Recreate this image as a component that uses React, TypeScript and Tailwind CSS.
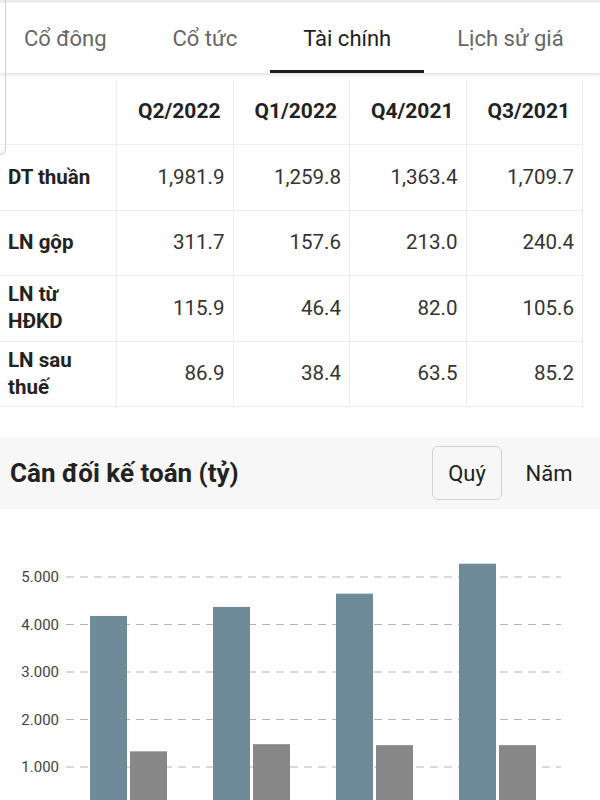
const tabs = ["Cổ đông", "Cổ tức", "Tài chính", "Lịch sử giá"];
const quarters = ["Q2/2022", "Q1/2022", "Q4/2021", "Q3/2021"];

const rows: { label: string; values: string[] }[] = [
  { label: "DT thuần", values: ["1,981.9", "1,259.8", "1,363.4", "1,709.7"] },
  { label: "LN gộp", values: ["311.7", "157.6", "213.0", "240.4"] },
  { label: "LN từ HĐKD", values: ["115.9", "46.4", "82.0", "105.6"] },
  { label: "LN sau thuế", values: ["86.9", "38.4", "63.5", "85.2"] },
];

const assets = [4180, 4370, 4650, 5280];
const equity = [1330, 1480, 1460, 1460];
const ticks = [5000, 4000, 3000, 2000, 1000];

const BASE = 305.5;
const SCALE = 0.0475;

function BalanceChart() {
  return (
    <svg width="600" height="300" viewBox="0 0 600 300" className="block">
      {ticks.map((t) => {
        const y = BASE - t * SCALE;
        return (
          <g key={t}>
            <line
              x1="66"
              x2="561"
              y1={y}
              y2={y}
              stroke="#b3b3b3"
              strokeWidth="1"
              strokeDasharray="8 6"
            />
            <text
              x="59"
              y={y + 5}
              textAnchor="end"
              fontSize="15"
              fill="#444"
              fontFamily="Roboto, sans-serif"
            >
              {t.toLocaleString("de-DE")}
            </text>
          </g>
        );
      })}
      {assets.map((v, i) => {
        const x = 90 + i * 123;
        const hA = v * SCALE;
        const hE = equity[i] * SCALE;
        return (
          <g key={i}>
            <rect x={x} y={BASE - hA} width="37" height={hA} fill="#6f8a99" />
            <rect x={x + 40} y={BASE - hE} width="37" height={hE} fill="#878787" />
          </g>
        );
      })}
    </svg>
  );
}

export default function App() {
  return (
    <div className="relative w-[600px] h-[800px] overflow-hidden bg-white font-['Roboto',sans-serif] text-[#222]">
      <div className="absolute left-0 top-0 z-20 w-[6px] h-[155px] border-r border-b border-[#d0d0d0] rounded-br-[6px]" />

      <div className="relative z-10 h-[73px] border-t-[3px] border-[#ececec] bg-white shadow-[0_2px_4px_rgba(0,0,0,0.12)] overflow-hidden">
        <div className="flex h-full -ml-[9px]">
          {tabs.map((t, i) => (
            <div
              key={t}
              className={
                i === 2
                  ? "relative flex items-center px-[33px] text-[22px] text-[#1e1e1e] whitespace-nowrap"
                  : "relative flex items-center px-[33px] text-[22px] text-[#666] whitespace-nowrap"
              }
            >
              {t}
              {i === 2 && (
                <div className="absolute left-0 right-0 bottom-0 h-[3px] bg-[#1e1e1e]" />
              )}
            </div>
          ))}
        </div>
      </div>

      <div className="mt-[7px] grid grid-cols-[117px_repeat(4,116.5px)]">
        <div className="h-[65px] border-r border-b border-[#ececec]" />
        {quarters.map((q) => (
          <div
            key={q}
            className="h-[65px] flex items-center justify-end pr-[12px] border-r border-b border-[#ececec] text-[21px] font-bold text-[#222]"
          >
            {q}
          </div>
        ))}
        {rows.map((r) => (
          <div key={r.label} className="contents">
            <div className="h-[65.5px] flex items-center pl-[8px] pr-[20px] border-r border-b border-[#ececec] text-[20.5px] leading-[27px] font-bold text-[#222]">
              {r.label}
            </div>
            {r.values.map((v, j) => (
              <div
                key={j}
                className="h-[65.5px] flex items-center justify-end pr-[8px] border-r border-b border-[#ececec] text-[20.5px] text-[#333]"
              >
                {v}
              </div>
            ))}
          </div>
        ))}
      </div>

      <div className="mt-[30px] h-[72px] bg-[#f7f7f7] flex items-center justify-between pl-[10px] pr-[16px]">
        <div className="text-[26px] font-bold text-[#222]">Cân đối kế toán (tỷ)</div>
        <div className="flex items-center gap-[12px]">
          <div className="w-[70px] h-[54px] flex items-center justify-center border border-[#d2d2d2] rounded-[6px] text-[22px] text-[#222]">
            Quý
          </div>
          <div className="w-[70px] h-[54px] flex items-center justify-center text-[22px] text-[#222]">
            Năm
          </div>
        </div>
      </div>

      <BalanceChart />
    </div>
  );
}
